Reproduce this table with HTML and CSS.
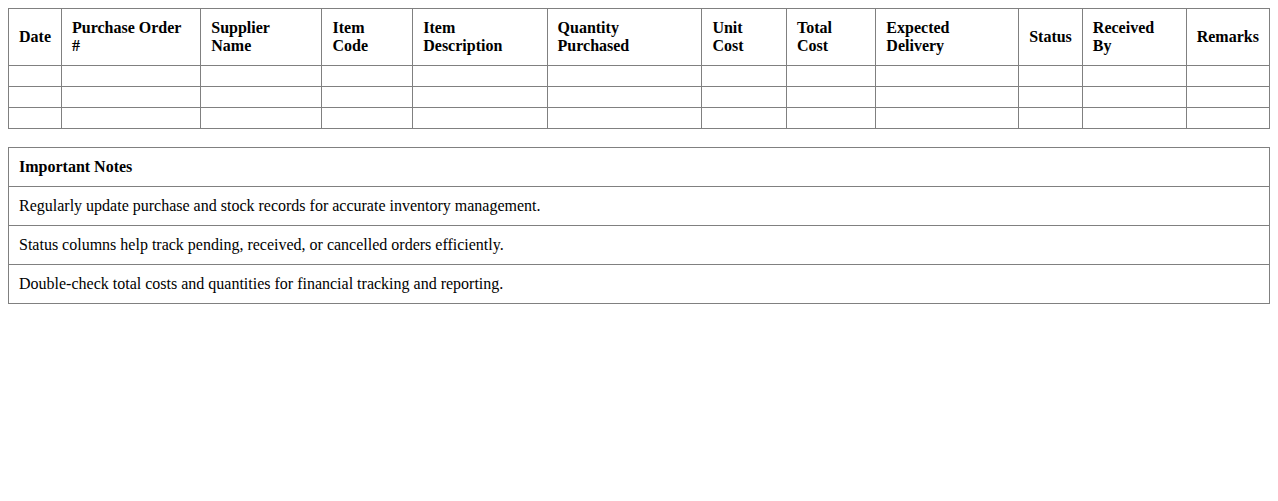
FILE: index.html
```html
<!DOCTYPE html>
<html>
<head>
<meta charset="utf-8">
<link rel="stylesheet" href="styles.css">
</head>
<body>
<table class="po-table">
  <thead>
    <tr>
      <th>Date</th>
      <th>Purchase Order #</th>
      <th>Supplier Name</th>
      <th>Item Code</th>
      <th>Item Description</th>
      <th>Quantity Purchased</th>
      <th>Unit Cost</th>
      <th>Total Cost</th>
      <th>Expected Delivery</th>
      <th>Status</th>
      <th>Received By</th>
      <th>Remarks</th>
    </tr>
  </thead>
  <tbody>
    <tr><td></td><td></td><td></td><td></td><td></td><td></td><td></td><td></td><td></td><td></td><td></td><td></td></tr>
    <tr><td></td><td></td><td></td><td></td><td></td><td></td><td></td><td></td><td></td><td></td><td></td><td></td></tr>
    <tr><td></td><td></td><td></td><td></td><td></td><td></td><td></td><td></td><td></td><td></td><td></td><td></td></tr>
  </tbody>
</table>
<table class="notes-table">
  <tr><th>Important Notes</th></tr>
  <tr><td>Regularly update purchase and stock records for accurate inventory management.</td></tr>
  <tr><td>Status columns help track pending, received, or cancelled orders efficiently.</td></tr>
  <tr><td>Double-check total costs and quantities for financial tracking and reporting.</td></tr>
</table>
</body>
</html>
```
FILE: styles.css
```css
body {
  margin: 8px;
  font-family: "Liberation Serif", "Times New Roman", serif;
  font-size: 16px;
  line-height: 18px;
  color: #000;
  background: #fff;
}
table {
  width: 100%;
  border-collapse: collapse;
}
th, td {
  border: 1px solid #808080;
  padding: 10px;
  text-align: left;
  vertical-align: middle;
}
th {
  font-weight: bold;
}
.notes-table {
  margin-top: 18px;
}
```
